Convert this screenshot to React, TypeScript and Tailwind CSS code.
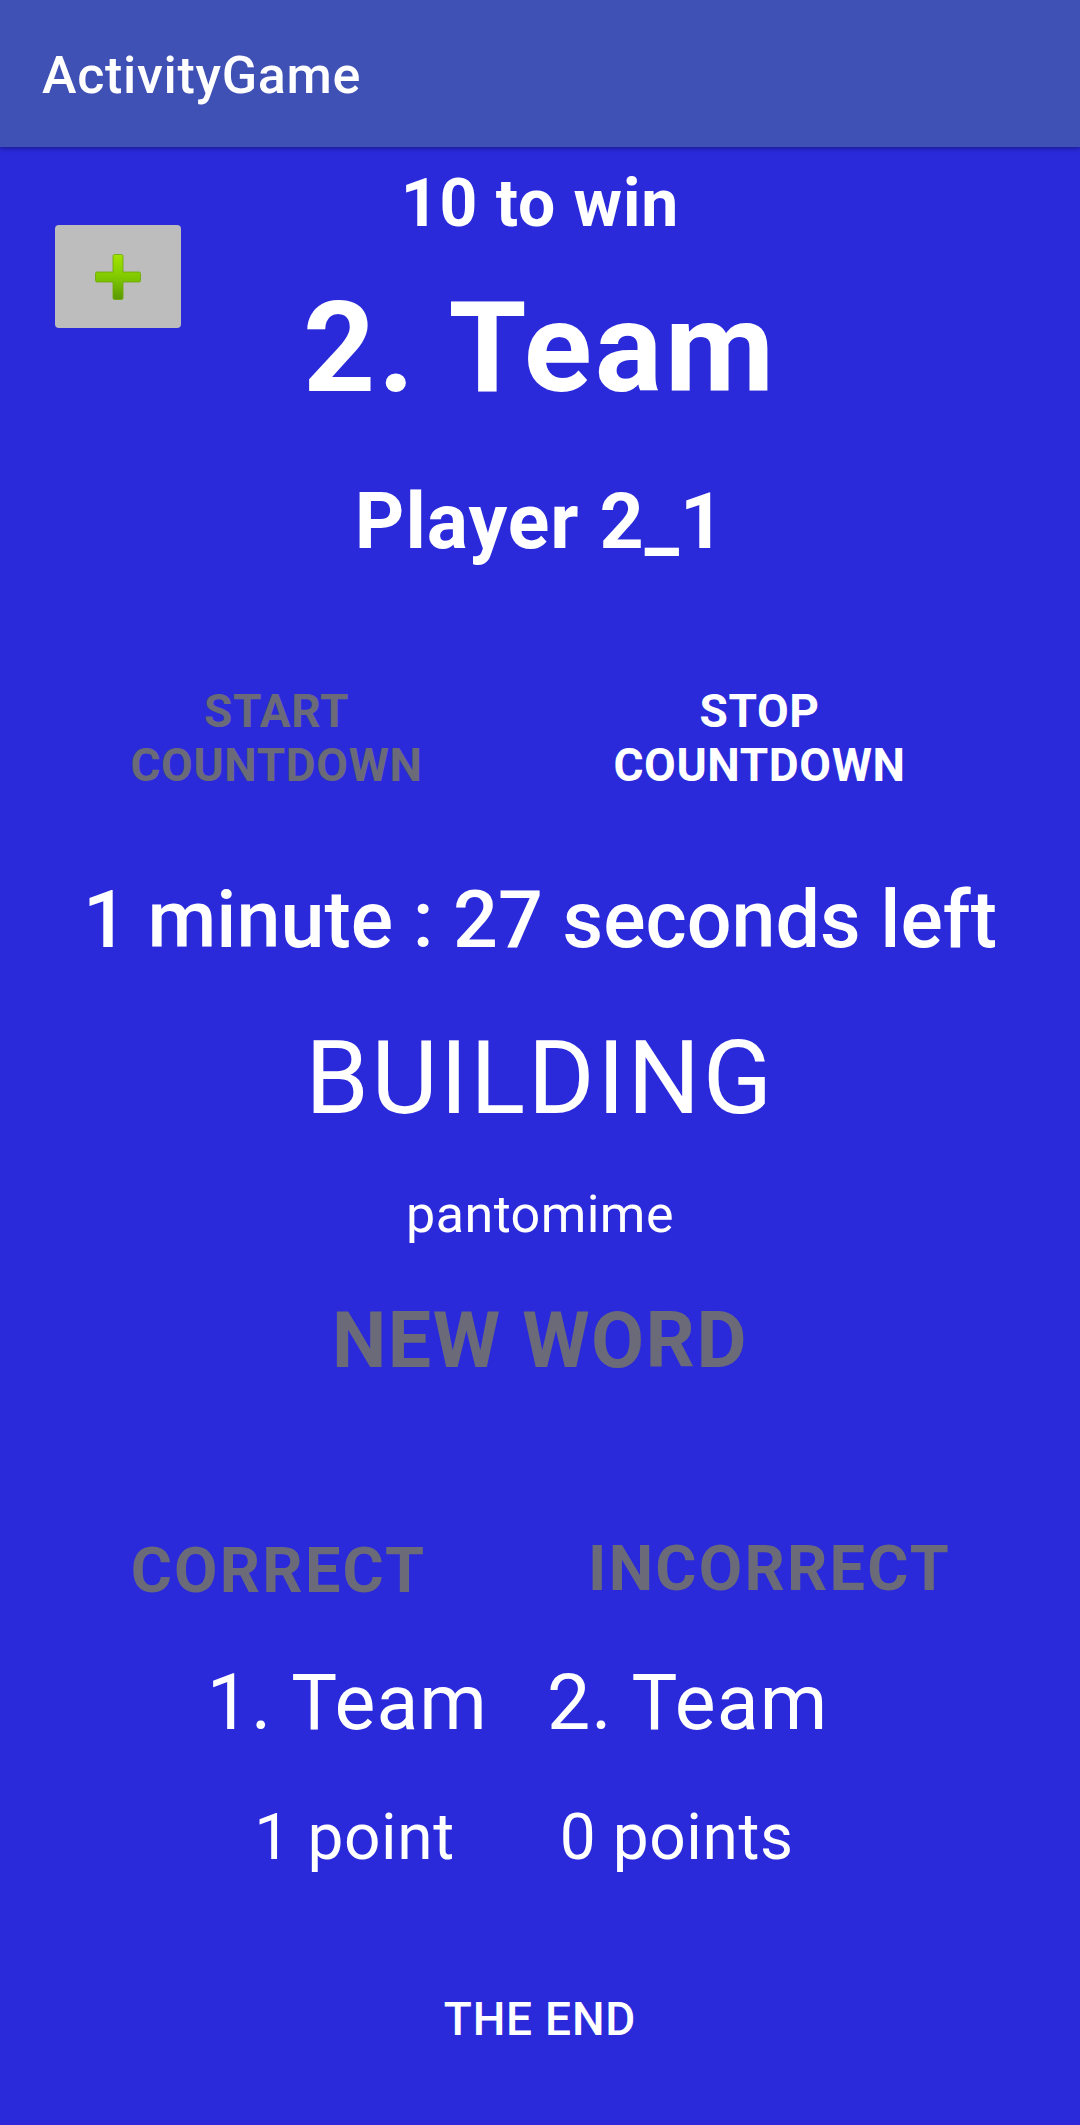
import React from "react";

function PlusIcon() {
  return (
    <svg width="46" height="46" viewBox="0 0 46 46">
      <defs>
        <linearGradient id="pg" x1="0" y1="0" x2="0" y2="1">
          <stop offset="0" stopColor="#a2e400" />
          <stop offset="0.5" stopColor="#80c900" />
          <stop offset="1" stopColor="#5b9900" />
        </linearGradient>
      </defs>
      <path
        d="M19.5 0.5 h7 a1.5 1.5 0 0 1 1.5 1.5 v16 h16 a1.5 1.5 0 0 1 1.5 1.5 v7 a1.5 1.5 0 0 1 -1.5 1.5 h-16 v16 a1.5 1.5 0 0 1 -1.5 1.5 h-7 a1.5 1.5 0 0 1 -1.5 -1.5 v-16 h-16 a1.5 1.5 0 0 1 -1.5 -1.5 v-7 a1.5 1.5 0 0 1 1.5 -1.5 h16 v-16 a1.5 1.5 0 0 1 1.5 -1.5 z"
        fill="url(#pg)"
        stroke="#6aa800"
        strokeWidth="0.8"
      />
    </svg>
  );
}

export default function App() {
  return (
    <div className="min-h-[2125px] w-[1080px] bg-[#2a2adb] font-['Roboto',sans-serif] text-white flex flex-col">
      <div className="h-[147px] bg-[#3f51b5] pl-[42px] pt-[50px] shadow-[0_2px_4px_rgba(0,0,0,0.3)] relative z-10">
        <div className="text-[52px] font-medium leading-none tracking-[0.7px]">ActivityGame</div>
      </div>
      <div className="relative flex flex-col items-center">
        <button className="absolute left-[55px] top-[78px] w-[126px] h-[103px] rounded-[4px] bg-[#bdbdbd] flex items-center justify-center">
          <PlusIcon />
        </button>
        <div className="mt-[24px] text-[66px] font-bold leading-none tracking-[0.9px]">10 to win</div>
        <div className="mt-[48px] text-[126px] font-bold leading-none tracking-[2.9px]">2. Team</div>
        <div className="mt-[73px] text-[77px] font-bold leading-none tracking-[1px]">Player 2_1</div>
        <div className="mt-[123px] self-stretch flex pl-[35px]">
          <div className="w-[483px] text-center text-[46px] font-bold leading-[54px] tracking-[0.6px] text-[#6a6a78]">
            START
            <br />
            COUNTDOWN
          </div>
          <div className="w-[483px] text-center text-[46px] font-bold leading-[54px] tracking-[0.6px] text-white">
            STOP
            <br />
            COUNTDOWN
          </div>
        </div>
        <div className="mt-[89px] text-[79px] font-medium leading-none whitespace-nowrap">
          1 minute : 27 seconds left
        </div>
        <div className="mt-[67px] text-[102px] font-normal leading-none tracking-[2.5px]">BUILDING</div>
        <div className="mt-[60px] text-[52px] font-normal leading-none tracking-[0.45px]">pantomime</div>
        <div className="mt-[62px] text-[77px] font-bold leading-none tracking-[1.5px] text-[#6a6a78]">NEW WORD</div>
        <div className="mt-[157px] self-stretch flex pl-[33px] text-[63px] font-bold leading-none tracking-[2.2px] text-[#6a6a78]">
          <div className="w-[491px] text-center pt-[2px]">CORRECT</div>
          <div className="w-[491px] text-center">INCORRECT</div>
        </div>
        <div className="mt-[63px] flex gap-[59px] pr-[45px] text-[77px] font-normal leading-none tracking-[1.1px]">
          <div>1. Team</div>
          <div>2. Team</div>
        </div>
        <div className="mt-[64px] flex gap-[105px] pr-[32px] text-[64px] font-normal leading-none tracking-[0.6px]">
          <div>1 point</div>
          <div>0 points</div>
        </div>
        <div className="mt-[126px] text-[46px] font-medium leading-none tracking-[0.8px]">THE END</div>
      </div>
    </div>
  );
}
